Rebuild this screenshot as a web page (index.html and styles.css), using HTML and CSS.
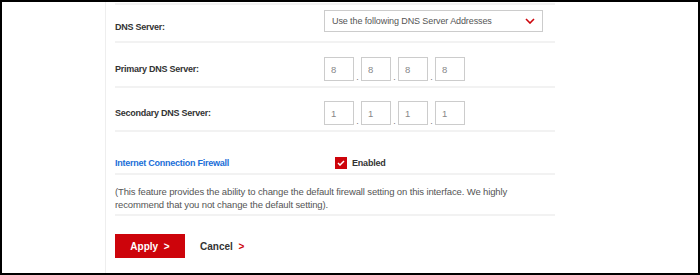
FILE: index.html
```html
<!DOCTYPE html>
<html lang="en">
<head>
    <meta charset="UTF-8">
    <title>Network Settings</title>
    <link rel="stylesheet" href="styles.css">
</head>
<body>

<div class="frame">
    <div class="side"></div>
    <div class="panel">
        <div class="form">
            <div class="row row-select">
                <label class="field-label">DNS Server:</label>
                <div class="field">
                    <div class="select">
                        <span>Use the following DNS Server Addresses</span>
                        <svg class="chevron" width="10" height="6" viewBox="0 0 10 6"><path d="M1 1 L5 5 L9 1" fill="none" stroke="#cd040b" stroke-width="1.6"/></svg>
                    </div>
                </div>
            </div>

            <div class="row row-ip first-ip">
                <label class="field-label">Primary DNS Server:</label>
                <div class="field ip">
                    <input type="text" value="8"><span class="dot">.</span>
                    <input type="text" value="8"><span class="dot">.</span>
                    <input type="text" value="8"><span class="dot">.</span>
                    <input type="text" value="8">
                </div>
            </div>

            <div class="row row-ip">
                <label class="field-label">Secondary DNS Server:</label>
                <div class="field ip">
                    <input type="text" value="1"><span class="dot">.</span>
                    <input type="text" value="1"><span class="dot">.</span>
                    <input type="text" value="1"><span class="dot">.</span>
                    <input type="text" value="1">
                </div>
            </div>

            <div class="row row-check">
                <label class="field-label link">Internet Connection Firewall</label>
                <div class="field">
                    <span class="checkbox">
                        <svg width="8" height="6" viewBox="0 0 8 6"><path d="M1 3 L3 5 L7 1" fill="none" stroke="#fff" stroke-width="1.5"/></svg>
                    </span>
                    <span class="check-text">Enabled</span>
                </div>
            </div>

            <div class="row row-note">
                <p>(This feature provides the ability to change the default firewall setting on this interface. We highly recommend that you not change the default setting).</p>
            </div>
        </div>

        <div class="actions">
            <button class="btn-apply">Apply <span class="arrow">&gt;</span></button>
            <button class="btn-cancel">Cancel <span class="arrow red">&gt;</span></button>
        </div>
    </div>
</div>

</body>
</html>
```

FILE: styles.css
```css
body { margin: 0; font-family: "Liberation Sans", Arial, sans-serif; color: #333; background: #fff; }
.frame {
    width: 700px;
    height: 275px;
    box-sizing: border-box;
    border: 2px solid #000;
    display: flex;
    overflow: hidden;
}
.side { width: 103px; border-right: 1px solid #eee; }
.panel { padding-left: 9px; width: 440px; }
.form { border-top: 2px solid #f2f2f2; margin-top: 1px; }
.row { display: flex; align-items: flex-start; border-bottom: 2px solid #f2f2f2; box-sizing: border-box; }
.field-label {
    width: 209px;
    font-size: 9px;
    font-weight: bold;
    letter-spacing: -0.25px;
    line-height: 12px;
}
.link { color: #1a6ed8; }

.row-select { height: 38px; padding-top: 5px; }
.row-select .field-label { margin-top: 11px; }
.select {
    width: 219px;
    height: 22px;
    border: 1px solid #ccc;
    display: flex;
    align-items: center;
    justify-content: space-between;
    padding: 0 7px;
    box-sizing: border-box;
    font-size: 9px;
    letter-spacing: -0.1px;
    color: #555;
}

.row-ip { height: 44px; padding-top: 13px; }
.row-ip.first-ip { height: 45px; padding-top: 14px; }
.row-ip .field-label { margin-top: 6px; }
.ip { display: flex; align-items: flex-end; }
.ip input {
    width: 30px;
    height: 24px;
    box-sizing: border-box;
    border: 1px solid #ccc;
    padding: 0 0 0 6px;
    font-family: inherit;
    font-size: 9.5px;
    color: #888;
    margin: 0;
}
.dot { width: 7px; text-align: center; font-size: 9px; color: #777; line-height: 8px; }

.row-check { height: 43px; align-items: flex-end; padding-bottom: 4px; }
.row-check .field { display: flex; align-items: center; padding-left: 11px; }
.checkbox {
    width: 12px;
    height: 12px;
    background: #cd040b;
    display: flex;
    align-items: center;
    justify-content: center;
    margin-right: 5px;
}
.check-text { font-size: 9px; font-weight: bold; letter-spacing: -0.2px; }

.row-note { height: 41px; }
.row-note p {
    margin: 0;
    padding: 10px 0 3px;
    font-size: 9.5px;
    letter-spacing: -0.13px;
    line-height: 13px;
    color: #555;
}

.actions { display: flex; align-items: center; margin-top: 18px; }
.btn-apply {
    width: 70px;
    height: 24px;
    background: #cd040b;
    border: none;
    color: #fff;
    font-family: inherit;
    font-weight: bold;
    font-size: 10px;
    margin-right: 15px;
}
.btn-cancel {
    background: none;
    border: none;
    padding: 0;
    font-family: inherit;
    font-weight: bold;
    font-size: 10px;
    color: #333;
}
.arrow { margin-left: 3px; }
.red { color: #cd040b; }
```
